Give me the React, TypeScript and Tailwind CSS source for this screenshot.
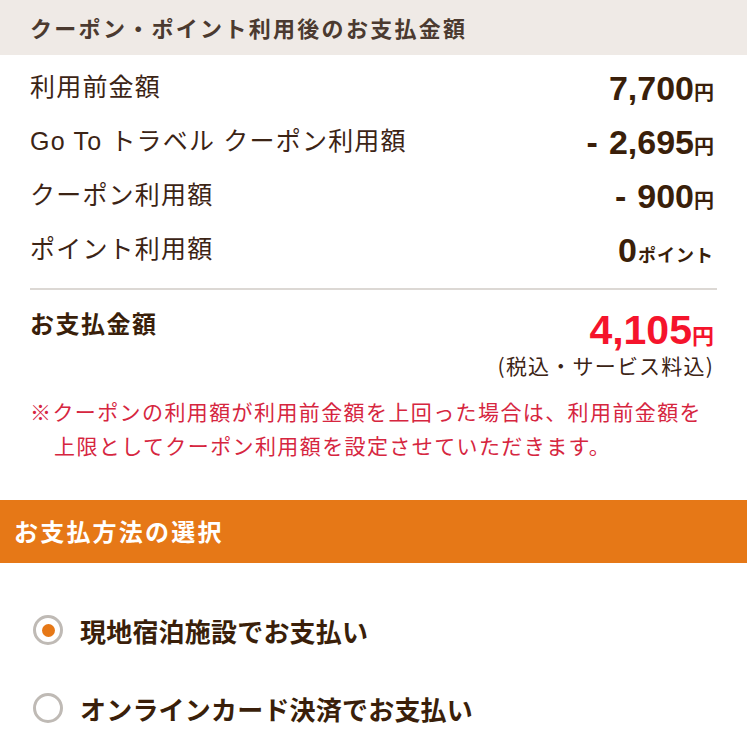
import React from "react";

const jp = '"Noto Sans CJK JP", sans-serif';
const num = '"Liberation Sans", "Noto Sans CJK JP", sans-serif';

type Row = { label: string; value: string; unit: string; minus?: boolean };

const rows: Row[] = [
  { label: "利用前金額", value: "7,700", unit: "円" },
  { label: "Go To トラベル クーポン利用額", value: "2,695", unit: "円", minus: true },
  { label: "クーポン利用額", value: "900", unit: "円", minus: true },
  { label: "ポイント利用額", value: "0", unit: "ポイント" },
];

function Radio({ checked }: { checked?: boolean }) {
  return (
    <span className="flex h-[30px] w-[30px] shrink-0 items-center justify-center rounded-full border-[3.5px] border-[#bfbab5] bg-white">
      {checked && <span className="h-[13px] w-[13px] rounded-full bg-[#e67817]" />}
    </span>
  );
}

export default function App() {
  return (
    <div className="w-[747px] bg-white" style={{ fontFamily: jp }}>
      <div className="flex h-[55px] items-center bg-[#efeae6] px-[30px]">
        <h2 className="text-[22px] font-bold tracking-[2.3px] text-[#4b3a30]">
          クーポン・ポイント利用後のお支払金額
        </h2>
      </div>

      <div className="px-[30px] pt-[6px]">
        {rows.map((r) => (
          <div key={r.label} className="flex h-[54px] items-center justify-between">
            <span
              className="text-[25px] tracking-[1.2px] text-[#3c2415]"
              style={{ fontFamily: num }}
            >
              {r.label}
            </span>
            <span className="flex items-baseline pr-[3px] text-[#3a1f0a]">
              {r.minus && (
                <span className="mr-[11px] text-[34px] font-bold" style={{ fontFamily: num }}>
                  -
                </span>
              )}
              <span className="text-[34px] font-bold" style={{ fontFamily: num }}>
                {r.value}
              </span>
              <span
                className={
                  r.unit === "円"
                    ? "text-[20px] font-bold"
                    : "ml-[1px] text-[18px] font-bold tracking-[1px]"
                }
              >
                {r.unit}
              </span>
            </span>
          </div>
        ))}

        <div className="mt-[11px] h-[2px] bg-[#dcd8d4]" />

        <div className="flex items-start justify-between pt-[16px]">
          <span className="text-[24px] font-bold leading-[34px] tracking-[1.5px] text-[#3a1f0a]">
            お支払金額
          </span>
          <div className="flex flex-col items-end pr-[3px]">
            <span className="flex items-baseline text-[#f5142c]">
              <span className="text-[41px] font-bold leading-[48px]" style={{ fontFamily: num }}>
                4,105
              </span>
              <span className="text-[22px] font-bold">円</span>
            </span>
            <span className="mt-[-4px] text-[21px] tracking-[1.2px] text-[#3c2415]">
              (税込・サービス料込)
            </span>
          </div>
        </div>

        <p className="mt-[12px] pl-[24px] -indent-[24px] text-[21px] leading-[34px] tracking-[1.4px] text-[#d6263f]">
          ※クーポンの利用額が利用前金額を上回った場合は、利用前金額を
          <br />
          上限としてクーポン利用額を設定させていただきます。
        </p>
      </div>

      <div className="mt-[38px] flex h-[63px] items-center bg-[#e67817] px-[14px]">
        <h2 className="text-[24px] font-bold tracking-[2.2px] text-white">お支払方法の選択</h2>
      </div>

      <div className="flex flex-col gap-[39px] px-[33px] pt-[48px] pb-[20px]">
        <label className="flex items-center gap-[17px]">
          <Radio checked />
          <span className="text-[26px] font-bold tracking-[0.2px] text-[#3a1f0a]">
            現地宿泊施設でお支払い
          </span>
        </label>
        <label className="flex items-center gap-[17px]">
          <Radio />
          <span className="text-[26px] font-bold tracking-[0.2px] text-[#3a1f0a]">
            オンラインカード決済でお支払い
          </span>
        </label>
      </div>
    </div>
  );
}
